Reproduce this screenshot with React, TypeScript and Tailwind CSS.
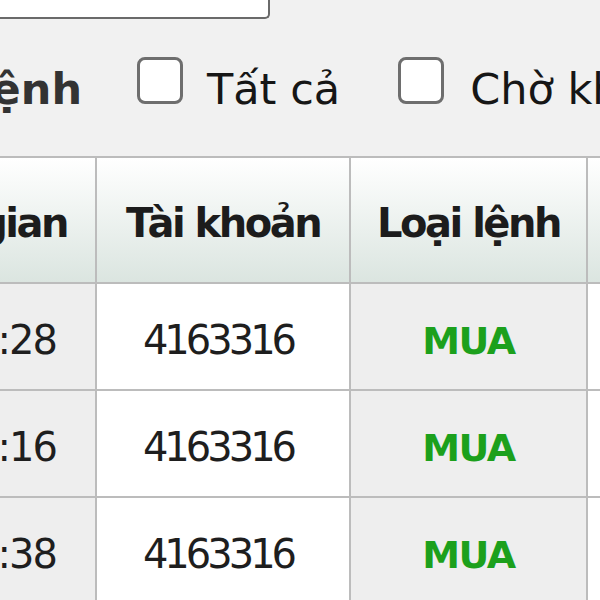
const rows = [
  { time: "10:15:28", account: "4163316", side: "MUA" },
  { time: "10:14:16", account: "4163316", side: "MUA" },
  { time: "10:12:38", account: "4163316", side: "MUA" },
];

function Box() {
  return (
    <input
      type="checkbox"
      className="mt-[38px] h-[47px] w-[46px] shrink-0 appearance-none rounded-[8px] border-[3px] border-[#6e6e6e] bg-white"
    />
  );
}

export default function App() {
  return (
    <div className="h-[600px] w-[600px] overflow-hidden bg-[#f1f1f1] font-['DejaVu_Sans',sans-serif]">
      <div className="flex h-[19px] overflow-hidden">
        <div className="h-[19px] w-[270px] shrink-0 rounded-br-[5px] border-b-2 border-r-2 border-[#6a6a6a] bg-white" />
        <span className="-mt-[45px] ml-[71px] text-[41px] leading-[41px] text-[#222]">p</span>
      </div>

      <div className="flex h-[137px] items-start text-[43px] leading-none">
        <div className="mt-[49px] flex w-[82px] shrink-0 justify-end whitespace-nowrap font-bold text-[#333]">
          Loại lệnh
        </div>
        <label className="ml-[55px] flex shrink-0 items-start gap-[24px] whitespace-nowrap text-[#161616]">
          <Box />
          <span className="mt-[49px]">Tất cả</span>
        </label>
        <label className="ml-[58px] flex shrink-0 items-start gap-[26px] whitespace-nowrap text-[#161616]">
          <Box />
          <span className="mt-[49px]">Chờ khớp</span>
        </label>
      </div>

      <div className="grid grid-cols-[95px_252px_235px_1fr] gap-[2px] bg-[#bcbcbc] pt-[2px]">
        <div className="flex h-[124px] justify-end bg-gradient-to-b from-white to-[#dbe5e0] pr-[28px] pt-[6px]">
          <span className="flex items-center whitespace-nowrap text-[40px] font-bold tracking-[-2.5px] text-[#1c1c1c]">
            Thời gian
          </span>
        </div>
        <div className="flex h-[124px] items-center justify-center bg-gradient-to-b from-white to-[#dbe5e0] pt-[6px] text-[40px] font-bold tracking-[-2.5px] text-[#1c1c1c]">
          Tài khoản
        </div>
        <div className="flex h-[124px] items-center justify-center bg-gradient-to-b from-white to-[#dbe5e0] pt-[6px] text-[40px] font-bold tracking-[-2.5px] text-[#1c1c1c]">
          Loại lệnh
        </div>
        <div className="h-[124px] bg-gradient-to-b from-white to-[#dbe5e0]" />

        {rows.map((r, i) => (
          <div key={i} className="contents">
            <div className="flex h-[105px] items-center justify-end whitespace-nowrap bg-[#eeeeee] pr-[39px] pt-[6px] text-[40px] tracking-[-2px] text-[#1e1e1e]">
              {r.time}
            </div>
            <div className="flex h-[105px] items-center justify-center bg-white pr-[10px] pt-[6px] text-[40px] tracking-[-4px] text-[#1e1e1e]">
              {r.account}
            </div>
            <div className="flex h-[105px] items-center justify-center bg-[#eeeeee] pt-[10px] text-[38px] font-bold tracking-[-1.5px] text-[#1ca01c]">
              {r.side}
            </div>
            <div className="h-[105px] bg-white" />
          </div>
        ))}
      </div>
    </div>
  );
}
